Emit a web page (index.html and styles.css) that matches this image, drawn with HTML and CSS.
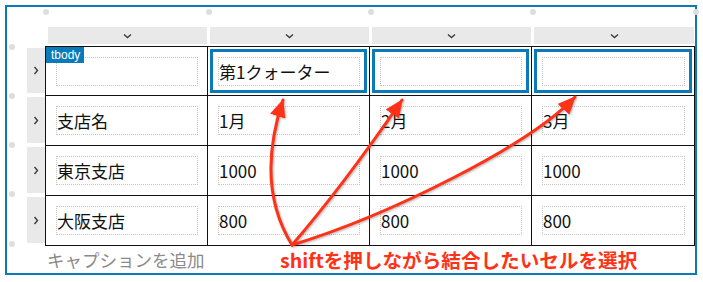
FILE: index.html
```html
<!DOCTYPE html>
<html lang="ja">
<head>
<meta charset="utf-8">
<title>Table block</title>
<link rel="stylesheet" href="styles.css">
</head>
<body>
<div class="editor">
  <span class="dot dot-t1"></span>
  <span class="dot dot-t2"></span>
  <span class="dot dot-t3"></span>
  <span class="dot dot-t4"></span>
  <span class="dot dot-t5"></span>
  <span class="dot dot-l1"></span>
  <span class="dot dot-l2"></span>
  <span class="dot dot-l3"></span>
  <span class="dot dot-l4"></span>
  <span class="dot dot-l5"></span>

  <div class="colbars">
    <div class="colbar"><svg class="chev-down" width="9" height="6" viewBox="0 0 9 6"><path d="M1 1.5 L4.5 4.5 L8 1.5" /></svg></div>
    <div class="colbar"><svg class="chev-down" width="9" height="6" viewBox="0 0 9 6"><path d="M1 1.5 L4.5 4.5 L8 1.5" /></svg></div>
    <div class="colbar"><svg class="chev-down" width="9" height="6" viewBox="0 0 9 6"><path d="M1 1.5 L4.5 4.5 L8 1.5" /></svg></div>
    <div class="colbar"><svg class="chev-down" width="9" height="6" viewBox="0 0 9 6"><path d="M1 1.5 L4.5 4.5 L8 1.5" /></svg></div>
  </div>

  <div class="tablearea">
    <div class="handles">
      <div class="handle h1"><svg class="chev-right" width="6" height="9" viewBox="0 0 6 9"><path d="M1.5 1 L4.5 4.5 L1.5 8" /></svg></div>
      <div class="handle"><svg class="chev-right" width="6" height="9" viewBox="0 0 6 9"><path d="M1.5 1 L4.5 4.5 L1.5 8" /></svg></div>
      <div class="handle"><svg class="chev-right" width="6" height="9" viewBox="0 0 6 9"><path d="M1.5 1 L4.5 4.5 L1.5 8" /></svg></div>
      <div class="handle"><svg class="chev-right" width="6" height="9" viewBox="0 0 6 9"><path d="M1.5 1 L4.5 4.5 L1.5 8" /></svg></div>
    </div>
    <div class="tablewrap">
      <span class="tag">tbody</span>
      <table class="grid">
        <colgroup><col class="c1"><col class="c2"><col class="c3"><col class="c4"></colgroup>
        <tbody>
          <tr class="r1">
            <td><div class="field"></div></td>
            <td class="sel"><div class="field">第1クォーター</div></td>
            <td class="sel"><div class="field"></div></td>
            <td class="sel"><div class="field"></div></td>
          </tr>
          <tr>
            <td><div class="field">支店名</div></td>
            <td><div class="field">1月</div></td>
            <td><div class="field">2月</div></td>
            <td><div class="field">3月</div></td>
          </tr>
          <tr>
            <td><div class="field">東京支店</div></td>
            <td><div class="field">1000</div></td>
            <td><div class="field">1000</div></td>
            <td><div class="field">1000</div></td>
          </tr>
          <tr>
            <td><div class="field">大阪支店</div></td>
            <td><div class="field">800</div></td>
            <td><div class="field">800</div></td>
            <td><div class="field">800</div></td>
          </tr>
        </tbody>
      </table>
    </div>
  </div>

  <div class="captionrow">
    <span class="caption">キャプションを追加</span>
    <span class="note">shiftを押しながら結合したいセルを選択</span>
  </div>
</div>

<svg class="arrows" width="703" height="282" viewBox="0 0 703 282">
  <defs>
    <marker id="head" markerUnits="userSpaceOnUse" markerWidth="18" markerHeight="16" viewBox="0 0 18 16" refX="17" refY="8" orient="auto">
      <path d="M0 0 L18 8 L0 16 Z" fill="#ff3218"/>
    </marker>
  </defs>
  <g fill="none" stroke="#ff3218" stroke-width="3" stroke-linecap="round">
    <path d="M292 245 Q255 185 283 100" marker-end="url(#head)"/>
    <path d="M292 245 Q343 186 402 100" marker-end="url(#head)"/>
    <path d="M292 245 C390 215 530 145 575 97" marker-end="url(#head)"/>
  </g>
</svg>
</body>
</html>
```

FILE: styles.css
```css
* { box-sizing: border-box; }

html, body {
  margin: 0;
  padding: 0;
  background: #ffffff;
}

body {
  position: relative;
  width: 703px;
  height: 282px;
  overflow: hidden;
  font-family: "Noto Sans CJK JP", "Noto Sans", sans-serif;
  color: #1e1e1e;
}

.editor {
  position: relative;
  margin: 5px 0 0 5px;
  width: 692px;
  height: 270px;
  border: 2px solid #0a7ab8;
}

.dot {
  position: absolute;
  width: 6px;
  height: 6px;
  border-radius: 50%;
  background: #dedede;
}
.dot-t1 { left: 36px; top: 2px; }
.dot-t2 { left: 199px; top: 2px; }
.dot-t3 { left: 361px; top: 2px; }
.dot-t4 { left: 523px; top: 2px; }
.dot-t5 { left: 686px; top: 2px; }
.dot-l1 { left: 2px; top: 37px; }
.dot-l2 { left: 2px; top: 86px; }
.dot-l3 { left: 2px; top: 135px; }
.dot-l4 { left: 2px; top: 184px; }
.dot-l5 { left: 2px; top: 234px; }

.colbars {
  display: grid;
  grid-template-columns: 162px 162px 162px 163px;
  margin: 20px 0 0 39px;
  height: 17px;
}
.colbar {
  margin: 0 1px 0 2px;
  background: #e9e9e9;
  display: flex;
  align-items: center;
  justify-content: center;
}
.chev-down path, .chev-right path {
  fill: none;
  stroke: #3c3c3c;
  stroke-width: 1.4;
}
.chev-down { margin-top: 1px; }

.tablearea {
  display: flex;
  align-items: flex-start;
  margin-top: 2px;
}

.handles {
  width: 39px;
  padding-left: 20px;
  display: flex;
  flex-direction: column;
}
.handle {
  width: 18px;
  height: 46px;
  margin: 2px 0;
  background: #e9e9e9;
  display: flex;
  align-items: center;
  justify-content: center;
}
.handle.h1 { height: 45px; }

.tablewrap {
  position: relative;
}

.tag {
  position: absolute;
  left: 1px;
  top: 1px;
  width: 38px;
  height: 16px;
  background: #0a7ab8;
  color: #ffffff;
  font-family: "Liberation Sans", Arial, sans-serif;
  font-size: 12px;
  line-height: 16px;
  padding-left: 5px;
  z-index: 2;
}

.grid {
  border-collapse: collapse;
  table-layout: fixed;
  width: 649px;
}
.grid col.c1, .grid col.c2, .grid col.c3 { width: 162px; }
.grid col.c4 { width: 163px; }

.grid td {
  border: 1px solid #111111;
  height: 50px;
  padding: 0 9px 0 10px;
  vertical-align: middle;
}
.grid tr.r1 td { height: 49px; }

.grid td.sel {
  box-shadow: inset 0 0 0 2px #ffffff, inset 0 0 0 5px #0a7ab8;
}

.field {
  height: 29px;
  border: 1px dotted #c4c4c4;
  display: flex;
  align-items: center;
  font-size: 17px;
  line-height: 1;
  white-space: nowrap;
  color: #111111;
}

.captionrow {
  display: flex;
  align-items: center;
  height: 27px;
  padding-left: 40px;
}
.caption {
  width: 233px;
  font-size: 17.5px;
  line-height: 1;
  color: #8a8a8a;
}
.note {
  font-size: 19.6px;
  font-weight: bold;
  line-height: 1;
  color: #ff3218;
  white-space: nowrap;
}

.arrows {
  position: absolute;
  left: 0;
  top: 0;
  pointer-events: none;
  filter: drop-shadow(1px 1px 1px rgba(0, 0, 0, 0.3));
}
```
